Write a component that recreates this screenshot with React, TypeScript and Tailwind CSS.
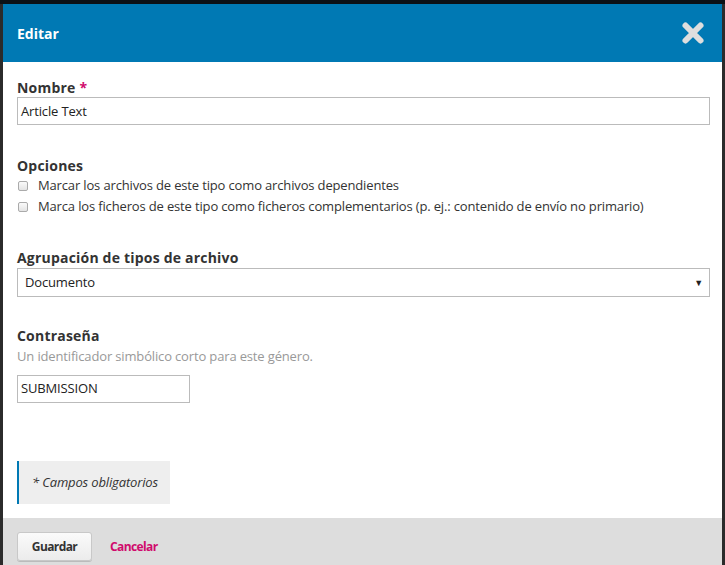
const font = { fontFamily: '"Open Sans", "Noto Sans", sans-serif' };

const CloseIcon = () => (
  <svg width="24" height="24" viewBox="0 0 24 24">
    <path d="M4.5 4.5 L19.5 19.5 M19.5 4.5 L4.5 19.5" stroke="#dedede" strokeWidth="6" strokeLinecap="round" />
  </svg>
);

const Check = ({ label }: { label: string }) => (
  <label className="flex items-center h-[21px] text-[13px] tracking-[-0.15px] text-[#333]">
    <span className="w-[10px] h-[10px] ml-[1px] border border-[#aaa] rounded-[2px] bg-gradient-to-b from-[#fafafa] to-[#e4e4e4]" />
    <span className="ml-[10px]">{label}</span>
  </label>
);

export default function App() {
  return (
    <div className="w-[725px] h-[565px] overflow-hidden bg-[#2b2b2b] border-t-4 border-[#0b1117]" style={font}>
      <div className="ml-[3px] w-[719px] h-full bg-white flex flex-col">
        {/* Header */}
        <div className="h-[58px] bg-[#0079b4] flex items-center justify-between pl-[14px] pr-[17px]">
          <h1 className="text-white text-[14px] font-bold">Editar</h1>
          <CloseIcon />
        </div>

        {/* Body */}
        <div className="flex-1 pl-[14px] pr-[12px] pt-[16px]">
          <div className="h-[19px] flex items-center text-[14px] font-bold tracking-[0.2px] text-[#333]">
            Nombre <span className="text-[#d00a6c] ml-[4px]">*</span>
          </div>
          <div className="h-[28px] border border-[#bbb] flex items-center px-[3px] pt-[1px] text-[13px] tracking-[-0.15px] text-[#222]">
            Article Text
          </div>

          <div className="mt-[30px] h-[20px] flex items-center text-[14px] font-bold tracking-[0.2px] text-[#333]">Opciones</div>
          <Check label="Marcar los archivos de este tipo como archivos dependientes" />
          <Check label="Marca los ficheros de este tipo como ficheros complementarios (p. ej.: contenido de envío no primario)" />

          <div className="mt-[30px] h-[20px] flex items-center text-[14px] font-bold tracking-[0.2px] text-[#333]">
            Agrupación de tipos de archivo
          </div>
          <div className="mt-[1px] h-[29px] border border-[#bbb] flex items-center justify-between pl-[7px] pr-[6px] text-[13px] tracking-[-0.15px] text-[#222]">
            <span>Documento</span>
            <span className="text-[9px] text-[#222]">▼</span>
          </div>

          <div className="mt-[28px] h-[20px] flex items-center text-[14px] font-bold tracking-[0.2px] text-[#333]">Contraseña</div>
          <div className="mt-[2px] h-[20px] flex items-center text-[13px] tracking-[-0.15px] text-[#999]">
            Un identificador simbólico corto para este género.
          </div>
          <div className="mt-[8px] w-[173px] h-[28px] border border-[#bbb] flex items-center px-[3px] text-[13px] tracking-[-0.15px] text-[#222]">
            SUBMISSION
          </div>

          <div className="mt-[58px] w-[153px] h-[43px] bg-[#eee] border-l-2 border-[#0079b4] flex items-center pl-[13px] text-[13px] italic tracking-[-0.15px] text-[#333]">
            * Campos obligatorios
          </div>
        </div>

        {/* Footer */}
        <div className="h-[47px] bg-[#ddd] flex items-start pt-[14px] pl-[14px] gap-[18px] shrink-0">
          <button className="h-[29px] w-[75px] pt-[1px] rounded-[3px] border border-[#c8c8c8] bg-gradient-to-b from-[#fafafa] to-[#ececec] shadow-[0_1px_0_#bbb] text-[12px] font-bold tracking-[-0.6px] text-[#333]">
            Guardar
          </button>
          <a className="h-[29px] pt-[1px] flex items-center text-[12px] font-bold tracking-[-0.6px] text-[#d00a6c]">Cancelar</a>
        </div>
      </div>
    </div>
  );
}
